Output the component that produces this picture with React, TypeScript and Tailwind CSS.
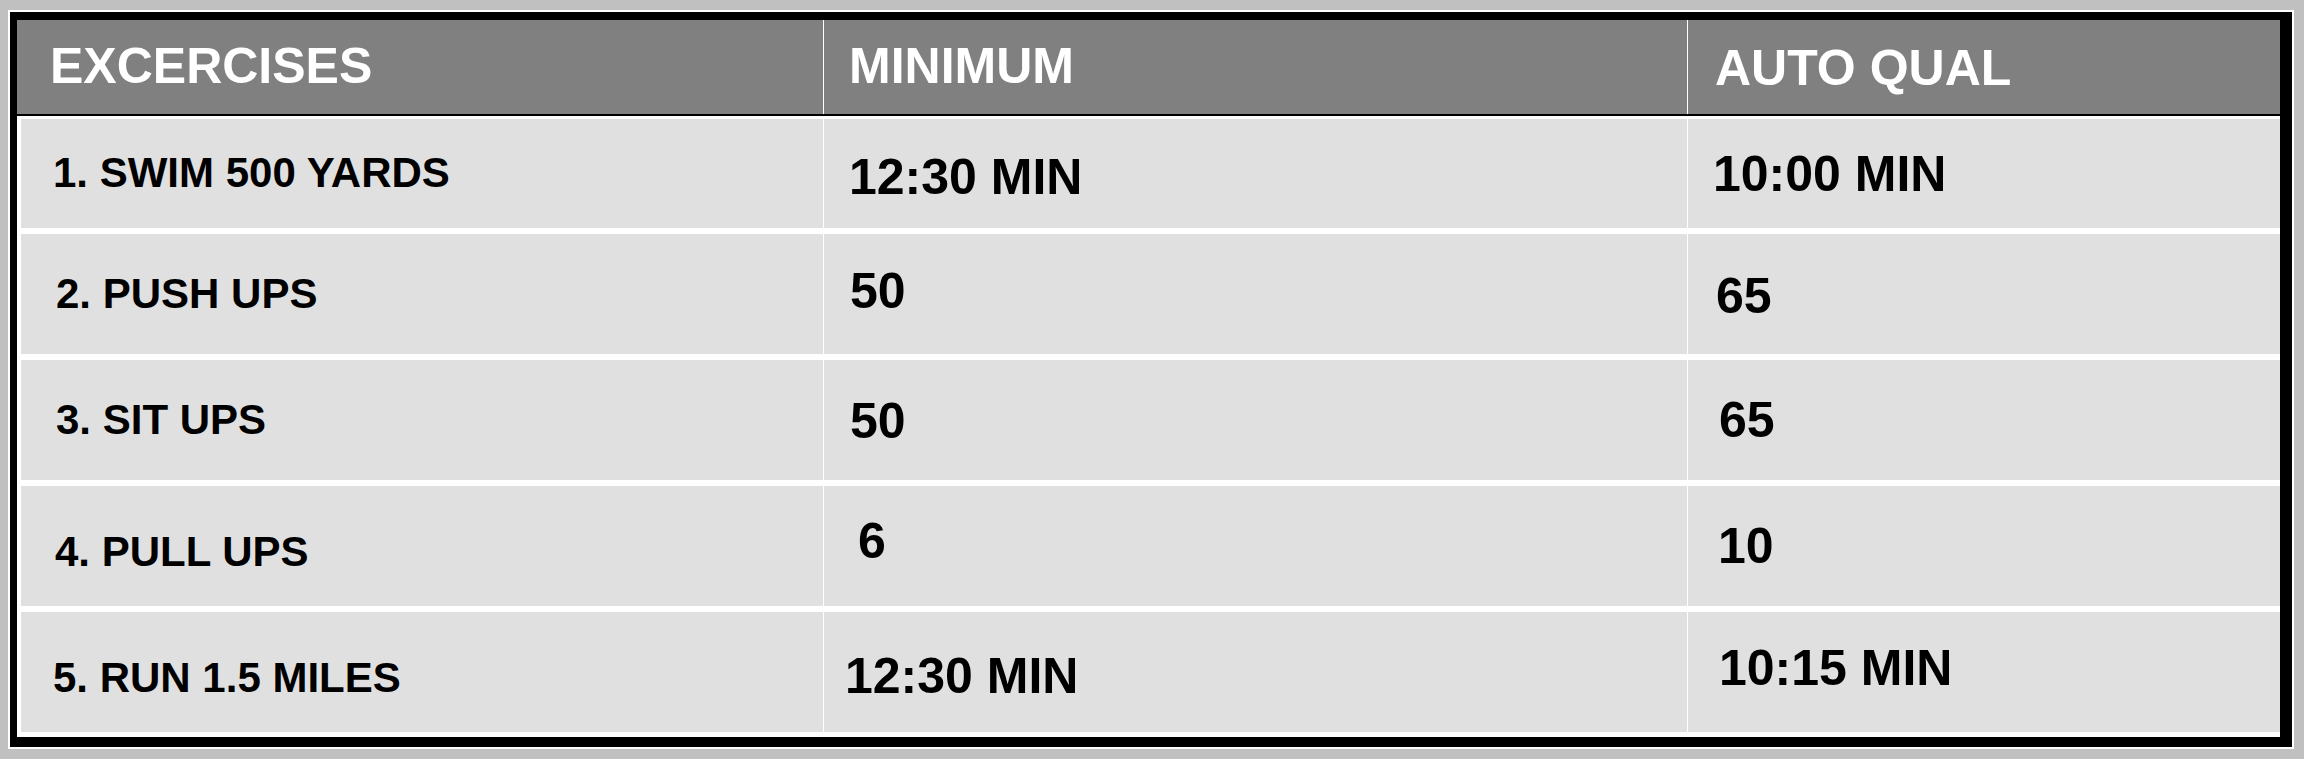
const font = { fontFamily: '"Liberation Sans", Arial, Helvetica, sans-serif' };

type Cell = { text: string; cls: string };

const header: Cell[] = [
  { text: "EXCERCISES", cls: "pl-[33px] pb-[2px] text-[50px]" },
  { text: "MINIMUM", cls: "pl-[25px] pb-[2px] text-[50px]" },
  { text: "AUTO QUAL", cls: "pl-[27px] pt-[2px] text-[50px]" },
];

const rows: { h: string; cells: Cell[] }[] = [
  {
    h: "h-[109px]",
    cells: [
      { text: "1. SWIM 500 YARDS", cls: "pl-[32px] pb-[2px]" },
      { text: "12:30 MIN", cls: "pl-[25px] pt-[6px]" },
      { text: "10:00 MIN", cls: "pl-[25px]" },
    ],
  },
  {
    h: "h-[120px]",
    cells: [
      { text: "2. PUSH UPS", cls: "pl-[35px]" },
      { text: "50", cls: "pl-[26px] pb-[6px]" },
      { text: "65", cls: "pl-[28px] pt-[4px]" },
    ],
  },
  {
    h: "h-[120px]",
    cells: [
      { text: "3. SIT UPS", cls: "pl-[35px]" },
      { text: "50", cls: "pl-[26px] pt-[2px]" },
      { text: "65", cls: "pl-[31px]" },
    ],
  },
  {
    h: "h-[120px]",
    cells: [
      { text: "4. PULL UPS", cls: "pl-[34px] pt-[12px]" },
      { text: "6", cls: "pl-[34px] pb-[10px]" },
      { text: "10", cls: "pl-[30px]" },
    ],
  },
  {
    h: "h-[120px]",
    cells: [
      { text: "5. RUN 1.5 MILES", cls: "pl-[32px] pt-[12px]" },
      { text: "12:30 MIN", cls: "pl-[21px] pt-[8px]" },
      { text: "10:15 MIN", cls: "pl-[31px] pb-[8px]" },
    ],
  },
];

export default function App() {
  return (
    <div className="w-full h-[759px] bg-[#c0c0c0] pt-[10px] pl-[8px]" style={font}>
      <div className="w-[2286px] border-2 border-white">
        <div className="border-l-[7px] border-t-[8px] border-r-[12px] border-b-[10px] border-black bg-white pb-[5px]">
          {/* header */}
          <div className="grid grid-cols-[806px_863px_592px] gap-x-px h-[94px]">
            {header.map((c, i) => (
              <div key={i} className={"flex items-center bg-[#808080] text-white font-bold leading-none " + c.cls}>
                {c.text}
              </div>
            ))}
          </div>
          <div className="h-[2px] bg-black mb-[3px]" />

          <div className="flex flex-col gap-y-[6px]">
            {rows.map((r, ri) => (
              <div key={ri} className={"grid grid-cols-[806px_863px_592px] gap-x-px " + r.h}>
                {r.cells.map((c, ci) => (
                  <div key={ci} className={ci === 0 ? "ml-[4px] flex" : "flex"}>
                    <div
                      className={
                        "flex-1 flex items-center bg-[#e0e0e0] text-black font-bold leading-none " +
                        (ci === 0 ? "text-[42px] " : "text-[50px] ") +
                        c.cls
                      }
                    >
                      {c.text}
                    </div>
                  </div>
                ))}
              </div>
            ))}
          </div>
        </div>
      </div>
    </div>
  );
}
